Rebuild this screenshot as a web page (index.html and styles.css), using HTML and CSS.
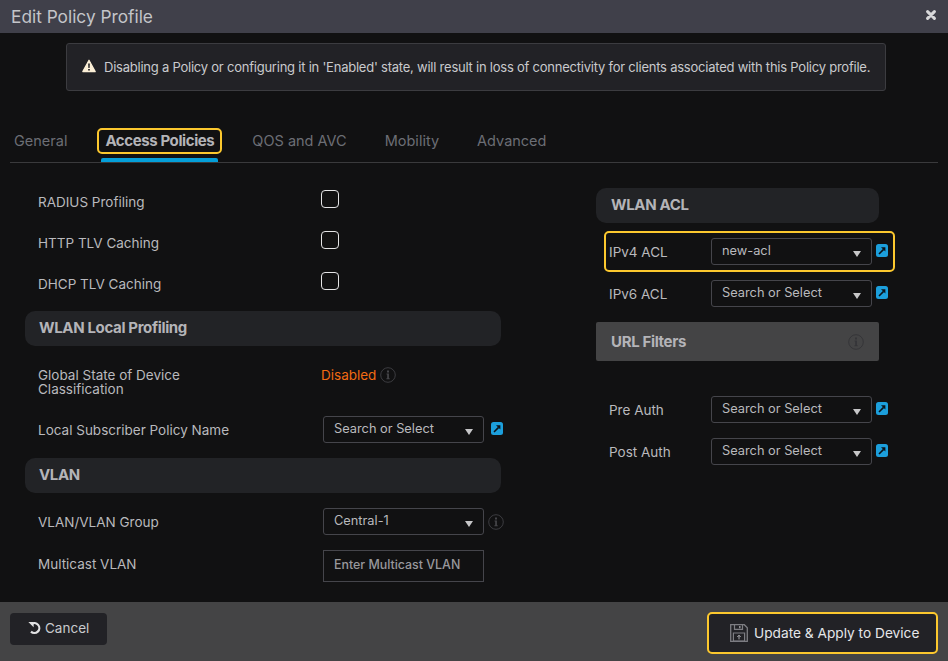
FILE: index.html
```html
<!DOCTYPE html>
<html>
	<head>
		<title>Edit Policy Profile</title>
		<link rel="stylesheet" href="styles.css">
	</head>
	<body>
		<div class="modal">
			<div class="modal_head">
				<span class="modal_title">Edit Policy Profile</span>
				<svg class="close_icon" width="10" height="10" viewBox="0 0 10 10"><path d="M1.6 1.6l6.8 6.8M8.4 1.6l-6.8 6.8" stroke="#d8d8da" stroke-width="3" stroke-linecap="round"/></svg>
			</div>
			<div class="modal_body">
				<div class="alert">
					<svg class="alert_icon" width="14" height="14" viewBox="0 0 14 14"><path d="M7 1.2L13.2 12.6H.8z" fill="#fbefd6" stroke="#fbefd6" stroke-width="1.2" stroke-linejoin="round"/><path d="M6.2 4.6h1.6l-.2 4.4H6.4zM6.2 10h1.6v1.6H6.2z" fill="#16161a"/></svg>
					Disabling a Policy or configuring it in 'Enabled' state, will result in loss of connectivity for clients associated with this Policy profile.
				</div>
				<div class="tabs">
					<div class="tab">General</div>
					<div class="tab tab_active">
						<div class="tab_label">Access Policies</div>
						<div class="tab_bar"></div>
					</div>
					<div class="tab">QOS and AVC</div>
					<div class="tab">Mobility</div>
					<div class="tab">Advanced</div>
				</div>
				<div class="columns">
					<div class="col_left">
						<div class="check_row"><label class="field_label">RADIUS Profiling</label><span class="checkbox"></span></div>
						<div class="check_row"><label class="field_label">HTTP TLV Caching</label><span class="checkbox"></span></div>
						<div class="check_row"><label class="field_label">DHCP TLV Caching</label><span class="checkbox"></span></div>
						<div class="section section_first">WLAN Local Profiling</div>
						<div class="state_row">
							<label class="field_label state_label">Global State of Device Classification</label>
							<span class="state_value">Disabled</span>
							<svg class="info_icon" width="16" height="16" viewBox="0 0 16 16"><circle cx="8" cy="8" r="7.3" fill="none" stroke="#3c3c40" stroke-width="1"/><path d="M7 3.6h2v1.8H7zM6.5 6.6h2.4v4.6h.8v1H6.4v-1h.8V7.6h-.7z" fill="#46464a"/></svg>
						</div>
						<div class="field_row subscriber_row">
							<label class="field_label">Local Subscriber Policy Name</label>
							<div class="select"><span class="select_text">Search or Select</span><span class="arrow"></span></div>
							<svg class="link_icon" width="12" height="13" viewBox="0 0 12 13"><rect width="12" height="13" rx="2.5" fill="#1c9fdc"/><path d="M3 10L7.6 5.4" stroke="#0b1218" stroke-width="1.6"/><path d="M5 3.2h4.4v4.4z" fill="#0b1218"/></svg>
						</div>
						<div class="section section_vlan">VLAN</div>
						<div class="field_row vlan_row">
							<label class="field_label">VLAN/VLAN Group</label>
							<div class="select"><span class="select_text">Central-1</span><span class="arrow"></span></div>
							<svg class="info_icon info_vlan" width="16" height="16" viewBox="0 0 16 16"><circle cx="8" cy="8" r="7.3" fill="none" stroke="#3c3c40" stroke-width="1"/><path d="M7 3.6h2v1.8H7zM6.5 6.6h2.4v4.6h.8v1H6.4v-1h.8V7.6h-.7z" fill="#46464a"/></svg>
						</div>
						<div class="field_row multicast_row">
							<label class="field_label">Multicast VLAN</label>
							<div class="text_input">Enter Multicast VLAN</div>
						</div>
					</div>
					<div class="col_right">
						<div class="section">WLAN ACL</div>
						<div class="acl_row acl_marked">
							<label class="field_label acl_label">IPv4 ACL</label>
							<div class="select"><span class="select_text">new-acl</span><span class="arrow"></span></div>
							<svg class="link_icon" width="12" height="13" viewBox="0 0 12 13"><rect width="12" height="13" rx="2.5" fill="#1c9fdc"/><path d="M3 10L7.6 5.4" stroke="#0b1218" stroke-width="1.6"/><path d="M5 3.2h4.4v4.4z" fill="#0b1218"/></svg>
						</div>
						<div class="acl_row">
							<label class="field_label acl_label">IPv6 ACL</label>
							<div class="select"><span class="select_text">Search or Select</span><span class="arrow"></span></div>
							<svg class="link_icon" width="12" height="13" viewBox="0 0 12 13"><rect width="12" height="13" rx="2.5" fill="#1c9fdc"/><path d="M3 10L7.6 5.4" stroke="#0b1218" stroke-width="1.6"/><path d="M5 3.2h4.4v4.4z" fill="#0b1218"/></svg>
						</div>
						<div class="section section_url">
							URL Filters
							<svg class="info_icon" width="16" height="16" viewBox="0 0 16 16"><circle cx="8" cy="8" r="7.3" fill="none" stroke="#353538" stroke-width="1"/><path d="M7 3.6h2v1.8H7zM6.5 6.6h2.4v4.6h.8v1H6.4v-1h.8V7.6h-.7z" fill="#353538"/></svg>
						</div>
						<div class="acl_row pre_auth">
							<label class="field_label acl_label">Pre Auth</label>
							<div class="select"><span class="select_text">Search or Select</span><span class="arrow"></span></div>
							<svg class="link_icon" width="12" height="13" viewBox="0 0 12 13"><rect width="12" height="13" rx="2.5" fill="#1c9fdc"/><path d="M3 10L7.6 5.4" stroke="#0b1218" stroke-width="1.6"/><path d="M5 3.2h4.4v4.4z" fill="#0b1218"/></svg>
						</div>
						<div class="acl_row">
							<label class="field_label acl_label">Post Auth</label>
							<div class="select"><span class="select_text">Search or Select</span><span class="arrow"></span></div>
							<svg class="link_icon" width="12" height="13" viewBox="0 0 12 13"><rect width="12" height="13" rx="2.5" fill="#1c9fdc"/><path d="M3 10L7.6 5.4" stroke="#0b1218" stroke-width="1.6"/><path d="M5 3.2h4.4v4.4z" fill="#0b1218"/></svg>
						</div>
					</div>
				</div>
			</div>
			<div class="modal_foot">
				<div class="btn_cancel">
					<svg width="14" height="14" viewBox="0 0 14 14"><path d="M3.4 3.2A4.9 4.9 0 1 1 3 10.6" fill="none" stroke="#e2e2e4" stroke-width="2.2"/><path d="M.4 1h5.2v5.2z" fill="#e2e2e4"/></svg>
					Cancel
				</div>
				<div class="btn_apply">
					<svg width="18" height="18" viewBox="0 0 18 18"><path d="M.7.7h13.6l3 3v13.6H.7z" fill="none" stroke="#7d7d82" stroke-width="1.3"/><path d="M4.5 1v4.4h8V1M3.4 9h11.2v8H3.4z" fill="none" stroke="#7d7d82" stroke-width="1.2"/><path d="M9.8 2v2.2" stroke="#9a9a9e" stroke-width="1.4"/><path d="M9 15.4v-4M7.3 13L9 11.2 10.7 13" fill="none" stroke="#a8a8ac" stroke-width="1"/></svg>
					Update &amp; Apply to Device
				</div>
			</div>
		</div>
	</body>
</html>
```

FILE: styles.css
```css
html,body{
	margin:0;
	padding:0;
	background:#111112;
}
body{
	font-family:Inter,"Liberation Sans",sans-serif;
	font-size:13.5px;
	color:#b9b9bd;
}
.modal{
	width:948px;
	height:661px;
	display:flex;
	flex-direction:column;
	overflow:hidden;
}
.modal_head{
	height:33px;
	flex:none;
	background:#40404a;
	display:flex;
	align-items:center;
	justify-content:space-between;
	padding:0 12px 0 11px;
}
.modal_title{
	font-size:17.3px;
	color:#c4c5c9;
	padding-bottom:1px;
}
.close_icon{
	margin-top:-3px;
}
.modal_body{
	flex:1;
	min-height:0;
}
.alert{
	width:818px;
	height:46px;
	margin:10px 0 0 66px;
	border:1px solid #3c3c40;
	border-radius:3px;
	background:#222226;
	display:flex;
	align-items:center;
	color:#c9cacd;
	font-size:13px;
	letter-spacing:-.23px;
	white-space:nowrap;
}
.alert_icon{
	flex:none;
	margin:-3px 8px 0 15px;
}
.tabs{
	margin:37px 10px 0 10px;
	padding-left:4px;
	height:34px;
	border-bottom:1px solid #3a3a3c;
	display:flex;
	align-items:flex-start;
	gap:38px;
}
.tab{
	line-height:26px;
	font-size:14.5px;
	color:#6c6e75;
}
.tab_active{
	margin:0 -8px;
	display:flex;
	flex-direction:column;
	align-items:center;
}
.tab_label{
	height:22px;
	line-height:22px;
	padding:0 6px;
	border:2px solid #fcc82e;
	border-radius:5px;
	font-size:15px;
	font-weight:700;
	letter-spacing:-.4px;
	color:#b4b4b8;
}
.tab_bar{
	width:117px;
	height:4px;
	margin-top:4px;
	background:#049fd9;
	border-radius:2px 2px 0 0;
}
.columns{
	display:flex;
	align-items:flex-start;
}
.col_left{
	width:476px;
	margin-left:25px;
	padding-top:18px;
}
.col_right{
	width:300px;
	margin-left:95px;
	padding-top:25px;
}
.check_row{
	height:41px;
	padding-left:13px;
	display:flex;
	align-items:center;
}
.field_label{
	display:block;
	width:285px;
	flex:none;
}
.checkbox{
	width:16px;
	height:16px;
	margin:-5px 0 0 -2px;
	border:1px solid #e4e4e6;
	border-radius:4px;
}
.section{
	width:283px;
	height:35px;
	line-height:33px;
	box-sizing:border-box;
	padding-left:15px;
	background:#222326;
	border-radius:10px;
	font-size:15px;
	font-weight:700;
	letter-spacing:-.35px;
	color:#b4b4b8;
}
.col_left .section{
	width:476px;
	padding-left:14px;
}
.section_first{
	margin-top:7px;
}
.section_vlan{
	margin-top:15px;
}
.section_url{
	height:39px;
	margin-top:8px;
	padding-right:15px;
	background:#444445;
	border-radius:2px;
	display:flex;
	align-items:center;
	justify-content:space-between;
}
.state_row{
	margin-top:22px;
	padding-left:13px;
	display:flex;
	align-items:flex-start;
	line-height:14px;
}
.state_label{
	padding-right:118px;
	width:165px;
}
.state_value{
	color:#f26b12;
}
.state_row .info_icon{
	flex:none;
	margin:-1px 0 0 4px;
}
.field_row{
	padding-left:13px;
	display:flex;
	align-items:center;
}
.subscriber_row{
	margin-top:20px;
}
.vlan_row{
	margin-top:15px;
}
.multicast_row{
	margin-top:15px;
}
.multicast_row .field_label{
	margin-top:-4px;
}
.select{
	width:161px;
	height:27px;
	flex:none;
	box-sizing:border-box;
	padding:0 10px 0 10px;
	border:1px solid #45454b;
	border-radius:3px;
	display:flex;
	align-items:center;
	justify-content:space-between;
	color:#b9b9bd;
	font-size:12.8px;
}
.select_text{
	margin-top:-2px;
}
.arrow{
	width:0;
	height:0;
	margin-top:5px;
	border-left:4.5px solid transparent;
	border-right:4.5px solid transparent;
	border-top:6px solid #c6c6c8;
}
.text_input{
	width:161px;
	height:32px;
	box-sizing:border-box;
	padding-left:10px;
	border:1px solid #45454b;
	line-height:27px;
	font-size:12.4px;
	font-weight:500;
	color:#98989c;
}
.link_icon{
	flex:none;
	margin:-2px 0 0 7px;
}
.info_vlan{
	flex:none;
	margin-left:4px;
}
.acl_row{
	width:291px;
	height:41px;
	box-sizing:border-box;
	margin:1px 0 0 8px;
	padding-left:3px;
	border:2px solid transparent;
	border-radius:5px;
	display:flex;
	align-items:center;
}
.acl_marked{
	margin-top:8px;
	border-color:#fcc82e;
}
.acl_label{
	width:102px;
}
.acl_row .link_icon{
	margin-left:4px;
}
.pre_auth{
	margin-top:28px;
}
.modal_foot{
	height:59px;
	flex:none;
	background:#444445;
	display:flex;
	align-items:center;
	justify-content:space-between;
	padding:0 10px;
}
.btn_cancel{
	width:97px;
	height:32px;
	box-sizing:border-box;
	margin-top:-5px;
	padding:0 0 2px 18px;
	background:#222226;
	border-radius:4px;
	display:flex;
	align-items:center;
	gap:3px;
	color:#c9cacd;
}
.btn_apply{
	width:231px;
	height:42px;
	box-sizing:border-box;
	padding-left:21px;
	margin-top:2px;
	background:#222226;
	border:2px solid #fcc82e;
	border-radius:5px;
	display:flex;
	align-items:center;
	gap:6px;
	font-size:13.7px;
	color:#e6e7ea;
}
```
